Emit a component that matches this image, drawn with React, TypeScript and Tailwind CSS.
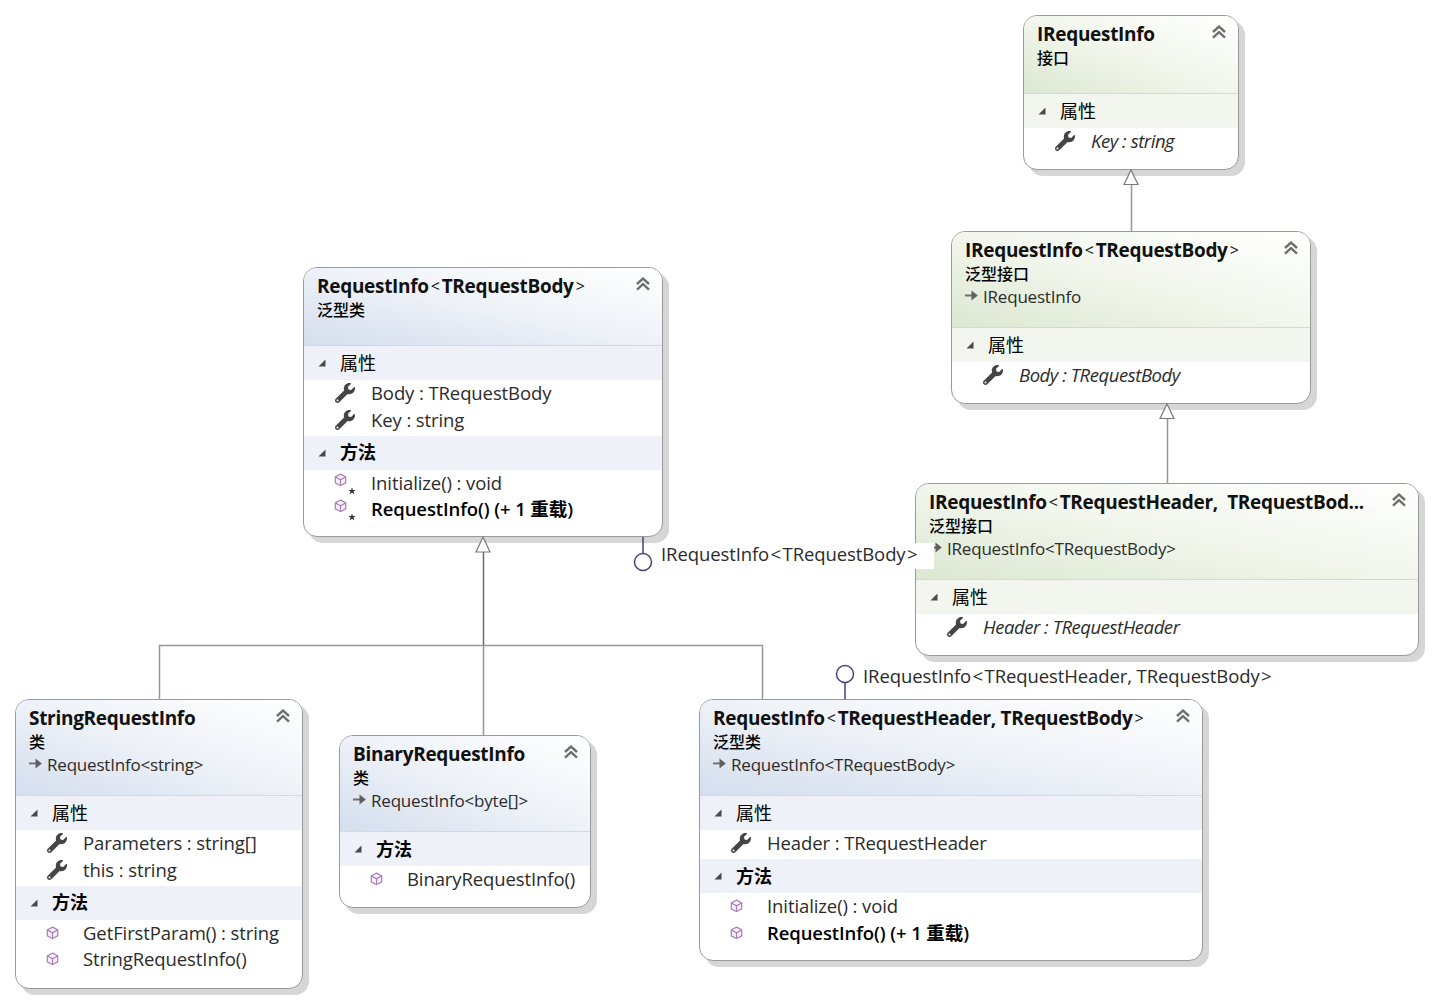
import React from 'react'
import { FaWrench } from 'react-icons/fa'

type RowKind = 'prop' | 'method' | 'generic'

interface Row {
  kind: RowKind
  text: React.ReactNode
  italic?: boolean
  bold?: boolean
}

interface Section {
  name: string
  bold?: boolean
  rows: Row[]
}

interface CardProps {
  place: string
  tone: 'blue' | 'green'
  title: React.ReactNode
  kind: string
  base?: React.ReactNode
  headerClass: string
  sections: Section[]
}

const cjk = "font-['Open_Sans','Noto_Sans_CJK_SC',sans-serif]"

const Lt = () => <span className="font-normal text-[16px] relative -top-px mx-[2px]">&lt;</span>
const Gt = () => <span className="font-normal text-[16px] relative -top-px ml-[2px]">&gt;</span>
const ThinLt = () => <span className="mx-[1.5px]">&lt;</span>
const ThinGt = () => <span className="ml-[1.5px]">&gt;</span>

const Cube = () => (
  <svg width="13" height="14" viewBox="0 0 14 15" fill="none" stroke="#a67db8" strokeWidth="1.3" className="shrink-0">
    <path d="M7 1.2 12.6 4v6.6L7 13.6 1.4 10.6V4Z" fill="#f6f1f8" />
    <path d="M1.6 4.2 7 7.2l5.4-3M7 7.2v6" />
  </svg>
)

const Star = () => (
  <svg width="8" height="8" viewBox="0 0 8 8" className="absolute left-[14px] top-[15px]">
    <path d="M4 .4 5 3h2.8L5.5 4.6l.9 2.9L4 5.8 1.6 7.5l.9-2.9L.2 3H3Z" fill="#3a3a3a" />
  </svg>
)

const BaseArrow = () => (
  <svg width="13" height="11" viewBox="0 0 13 11" className="shrink-0 mr-[5px] -mt-[2px]">
    <path d="M0 5.5h8" stroke="#6f6f6f" strokeWidth="1.8" />
    <path d="M6.5 .6 12.8 5.5 6.5 10.4Z" fill="#5f5f5f" />
  </svg>
)

const DoubleUp = () => (
  <svg width="16" height="14" viewBox="0 0 16 14" fill="none" stroke="#6e6e6e" strokeWidth="2.4" className="absolute right-[11px] top-[9px]">
    <path d="M2 7 8 1.6 14 7M2 12.6 8 7.2l6 5.4" />
  </svg>
)

const Expander = () => (
  <svg width="8" height="8" viewBox="0 0 8 8" className="shrink-0 mx-[14px]">
    <path d="M7.5 .5v7H.5Z" fill="#4a4a4a" />
  </svg>
)

const RowView = ({ row }: { row: Row }) => (
  <div className="flex items-center h-[26.5px] pl-[30px]">
    <span className="relative w-[37px] h-[22px] flex items-center shrink-0">
      {row.kind === 'prop' && <FaWrench className="w-[20px] h-[20px] text-[#454545] ml-px" />}
      {row.kind === 'method' && <Cube />}
      {row.kind === 'generic' && (
        <>
          <span className="-mt-[6px]">
            <Cube />
          </span>
          <Star />
        </>
      )}
    </span>
    <span
      className={`whitespace-nowrap ${row.italic ? 'text-[18.5px] italic tracking-[-0.45px]' : 'text-[18.5px] tracking-[-0.1px]'} ${row.bold ? 'font-semibold text-black' : 'text-[#2b2b2b]'}`}
    >
      {row.text}
    </span>
  </div>
)

const Card = ({ place, tone, title, kind, base, headerClass, sections }: CardProps) => (
  <div
    className={`absolute ${place} rounded-[14px] border-[1.5px] border-[#9a9a9a] bg-white shadow-[6px_6px_0_#d6d6d6] overflow-hidden ${cjk}`}
  >
    <div
      className={`relative ${headerClass} pl-[13px] pt-[6px] border-b border-[#d5d8dc] ${tone === 'blue' ? 'bg-gradient-to-tr from-[#d4deee] via-[#eef2f8] to-white' : 'bg-gradient-to-tr from-[#dce8d2] via-[#f2f6ec] to-white'}`}
    >
      <div className="h-[24px] leading-[24px] text-[19px] font-bold text-[#111] tracking-[-0.3px] whitespace-nowrap">{title}</div>
      <div className="h-[24px] leading-[24px] text-[16px] font-medium text-black whitespace-nowrap">{kind}</div>
      {base && (
        <div className="flex items-center h-[21px] text-[17px] tracking-[-0.2px] text-[#2b2b2b] whitespace-nowrap">
          <BaseArrow />
          <span>{base}</span>
        </div>
      )}
      <DoubleUp />
    </div>
    {sections.map((s) => (
      <div key={s.name}>
        <div className={`flex items-center h-[34px] ${tone === 'blue' ? 'bg-[#eef1f7]' : 'bg-[#f3f6ee]'}`}>
          <Expander />
          <span className={`text-[18px] text-black ${s.bold ? 'font-semibold' : ''}`}>{s.name}</span>
        </div>
        <div className="pb-[2.5px]">
          {s.rows.map((r, i) => (
            <RowView key={i} row={r} />
          ))}
        </div>
      </div>
    ))}
  </div>
)

// connector lines between the class boxes, drawn on the whole canvas
const Connectors = () => (
  <svg width="1432" height="1001" className="absolute left-0 top-0" fill="none">
    <g stroke="#969696" strokeWidth="1.5">
      <path d="M1131.5 185v46M1167.5 419v64M483.5 645v90M159.5 699V645.5h603V699" />
    </g>
    <path d="M483.5 552v93" stroke="#6b6b6b" strokeWidth="1.5" />
    <g stroke="#7a7a7a" strokeWidth="1.2" fill="white">
      <path d="M1131 170 1124 184.5h14ZM1167 404 1160 418.5h14ZM483 537 476 552h14Z" />
    </g>
    <g stroke="#47427e" strokeWidth="1.5">
      <path d="M643 537v16M845 683v16" />
      <circle cx="643" cy="562" r="8.5" fill="white" />
      <circle cx="845" cy="674" r="8.5" fill="white" />
    </g>
  </svg>
)

export default function App() {
  return (
    <div className={`relative w-[1432px] h-[1001px] bg-white overflow-hidden ${cjk}`}>
      <Card
        place="left-[1023px] top-[15px] w-[216px] h-[155px]"
        tone="green"
        headerClass="h-[78px]"
        title="IRequestInfo"
        kind="接口"
        sections={[{ name: '属性', rows: [{ kind: 'prop', text: 'Key : string', italic: true }] }]}
      />

      <Card
        place="left-[951px] top-[231px] w-[360px] h-[173px]"
        tone="green"
        headerClass="h-[96px]"
        title={<>IRequestInfo<Lt />TRequestBody<Gt /></>}
        kind="泛型接口"
        base="IRequestInfo"
        sections={[{ name: '属性', rows: [{ kind: 'prop', text: 'Body : TRequestBody', italic: true }] }]}
      />

      <Card
        place="left-[915px] top-[483px] w-[504px] h-[173px]"
        tone="green"
        headerClass="h-[96px]"
        title={<>IRequestInfo<Lt />TRequestHeader,&nbsp; TRequestBod...</>}
        kind="泛型接口"
        base={<>IRequestInfo&lt;TRequestBody&gt;</>}
        sections={[{ name: '属性', rows: [{ kind: 'prop', text: 'Header : TRequestHeader', italic: true }] }]}
      />

      <Card
        place="left-[303px] top-[267px] w-[360px] h-[270px]"
        tone="blue"
        headerClass="h-[78px]"
        title={<>RequestInfo<Lt />TRequestBody<Gt /></>}
        kind="泛型类"
        sections={[
          {
            name: '属性',
            rows: [
              { kind: 'prop', text: 'Body : TRequestBody' },
              { kind: 'prop', text: 'Key : string' },
            ],
          },
          {
            name: '方法',
            bold: true,
            rows: [
              { kind: 'generic', text: 'Initialize() : void' },
              { kind: 'generic', text: 'RequestInfo() (+ 1 重载)', bold: true },
            ],
          },
        ]}
      />

      <Card
        place="left-[15px] top-[699px] w-[288px] h-[290px]"
        tone="blue"
        headerClass="h-[96px]"
        title="StringRequestInfo"
        kind="类"
        base={<>RequestInfo&lt;string&gt;</>}
        sections={[
          {
            name: '属性',
            rows: [
              { kind: 'prop', text: 'Parameters : string[]' },
              { kind: 'prop', text: 'this : string' },
            ],
          },
          {
            name: '方法',
            bold: true,
            rows: [
              { kind: 'method', text: 'GetFirstParam() : string' },
              { kind: 'method', text: 'StringRequestInfo()' },
            ],
          },
        ]}
      />

      <Card
        place="left-[339px] top-[735px] w-[252px] h-[173px]"
        tone="blue"
        headerClass="h-[96px]"
        title="BinaryRequestInfo"
        kind="类"
        base={<>RequestInfo&lt;byte[]&gt;</>}
        sections={[{ name: '方法', bold: true, rows: [{ kind: 'method', text: 'BinaryRequestInfo()' }] }]}
      />

      <Card
        place="left-[699px] top-[699px] w-[504px] h-[262px]"
        tone="blue"
        headerClass="h-[96px]"
        title={<>RequestInfo<Lt />TRequestHeader, TRequestBody<Gt /></>}
        kind="泛型类"
        base={<>RequestInfo&lt;TRequestBody&gt;</>}
        sections={[
          { name: '属性', rows: [{ kind: 'prop', text: 'Header : TRequestHeader' }] },
          {
            name: '方法',
            bold: true,
            rows: [
              { kind: 'method', text: 'Initialize() : void' },
              { kind: 'method', text: 'RequestInfo() (+ 1 重载)', bold: true },
            ],
          },
        ]}
      />

      <Connectors />

      {/* lollipop labels sit on top of the boxes */}
      <div className="absolute left-[657px] top-[543px] w-[277px] h-[26px] pl-[4px] bg-white text-[18.5px] leading-[21px] tracking-[-0.1px] text-[#2b2b2b] whitespace-nowrap">
        IRequestInfo<ThinLt />TRequestBody<ThinGt />
      </div>
      <div className="absolute left-[863px] top-[665px] text-[18.5px] leading-[21px] tracking-[-0.1px] text-[#2b2b2b] whitespace-nowrap">
        IRequestInfo<ThinLt />TRequestHeader, TRequestBody<ThinGt />
      </div>
    </div>
  )
}
